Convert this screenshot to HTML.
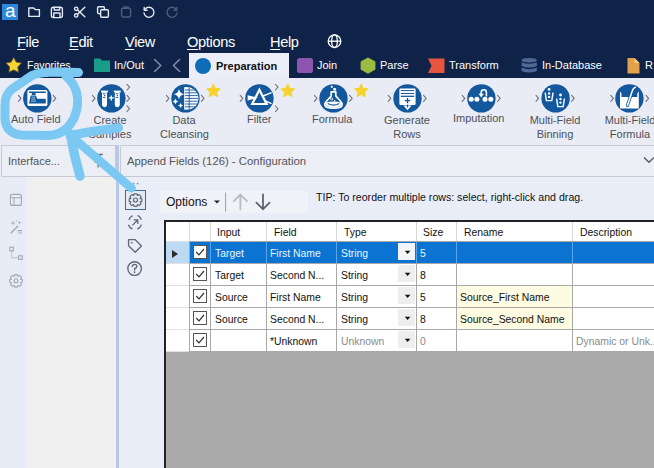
<!DOCTYPE html>
<html><head><meta charset="utf-8">
<style>
*{box-sizing:border-box;margin:0;padding:0}
html,body{width:654px;height:468px;overflow:hidden;background:#e9ecf5;font-family:"Liberation Sans",sans-serif;position:relative}
.a{position:absolute;white-space:nowrap}
#top{left:0;top:0;width:654px;height:78px;background:#0f2348}
.menu{color:#fff;font-size:14.6px;top:33.5px;letter-spacing:-0.35px}
.menu u{text-decoration:underline;text-decoration-thickness:1px;text-underline-offset:1.5px}
.tab{color:#fff;font-size:11px;top:59px}
.tl{color:#4c5058;font-size:11px;text-align:center;margin-top:-1px}
#pal{left:0;top:78px;width:654px;height:67px;background:#e9ecf5}
.hdr{background:#eceef5;border:1px solid #c6cad4}
.grid{border-collapse:collapse}
.cell{position:absolute;font-size:11.8px;color:#111;transform:scaleX(0.88);transform-origin:0 0}
</style></head><body>
<div id="top" class="a"></div>

<!-- logo -->
<div class="a" style="left:2px;top:4px;width:16px;height:16px;background:#2c88d8"></div>
<div class="a" style="left:5px;top:1px;color:#fff;font-size:19px;line-height:19px">a</div>

<!-- menu -->
<div class="a menu" style="left:17px"><u>F</u>ile</div>
<div class="a menu" style="left:69px"><u>E</u>dit</div>
<div class="a menu" style="left:125px"><u>V</u>iew</div>
<div class="a menu" style="left:187px"><u>O</u>ptions</div>
<div class="a menu" style="left:270px"><u>H</u>elp</div>

<!-- tabs -->
<div class="a tab" style="left:27px;font-size:10.6px">Favorites</div>
<div class="a tab" style="left:114px">In/Out</div>
<div class="a" style="left:189px;top:53px;width:100px;height:25px;background:#eceef7"></div>
<div class="a" style="left:216px;top:60px;font-size:11px;font-weight:bold;color:#111">Preparation</div>
<div class="a tab" style="left:317px">Join</div>
<div class="a tab" style="left:380px">Parse</div>
<div class="a tab" style="left:449px">Transform</div>
<div class="a tab" style="left:542px">In-Database</div>
<div class="a tab" style="left:645px">R</div>

<!-- palette -->
<div id="pal" class="a"></div>
<div class="a tl" style="left:11px;top:114px">Auto Field</div>
<div class="a tl" style="left:88px;top:114px;width:44px;line-height:14px">Create<br>Samples</div>
<div class="a tl" style="left:160px;top:114px;width:48px;line-height:14px">Data<br>Cleansing</div>
<div class="a tl" style="left:247px;top:114px">Filter</div>
<div class="a tl" style="left:312px;top:114px">Formula</div>
<div class="a tl" style="left:383px;top:114px;width:48px;line-height:14px">Generate<br>Rows</div>
<div class="a tl" style="left:453px;top:113px">Imputation</div>
<div class="a tl" style="left:526px;top:114px;width:58px;line-height:14px">Multi-Field<br>Binning</div>
<div class="a tl" style="left:601px;top:114px;width:58px;line-height:14px">Multi-Field<br>Formula</div>

<!-- left panel -->
<div class="a" style="left:0;top:176px;width:27px;height:292px;background:#e8ecf7"></div>
<div class="a" style="left:27px;top:176px;width:89px;height:292px;background:#f0f0f0"></div>
<div class="a hdr" style="left:1px;top:145px;width:115px;height:32px"></div>
<div class="a" style="left:8px;top:155px;font-size:11px;color:#555">Interface...</div>
<div class="a" style="left:116px;top:145px;width:3px;height:323px;background:#b8c7e6"></div>

<!-- right panel -->
<div class="a" style="left:119px;top:176px;width:535px;height:292px;background:#e9edf8"></div>
<div class="a hdr" style="left:120px;top:145px;width:540px;height:32px"></div>
<div class="a" style="left:127px;top:155px;font-size:11.3px;color:#555">Append Fields (126) - Configuration</div>

<!-- options bar -->
<div class="a" style="left:160px;top:191px;width:148px;height:22px;background:#f1f2f7"></div>
<div class="a" style="left:166px;top:195px;font-size:12px;color:#111">Options</div>
<div class="a" style="left:316px;top:191px;font-size:10.6px;color:#111">TIP: To reorder multiple rows: select, right-click and drag.</div>

<!-- table -->
<div class="a" style="left:164px;top:220px;width:490px;height:248px;background:#ababab;border-left:2px solid #222;border-top:2px solid #222"></div>
<div class="a" style="left:166px;top:222px;width:488px;height:129px;background:#fff"></div>
<div class="a" style="left:189px;top:241px;width:465px;height:22px;background:#0b74d3"></div>
<div class="a" style="left:166px;top:241px;width:23px;height:22px;background:#bcdaf4"></div>
<div class="a" style="left:172px;top:250px;width:0;height:0;border-top:4px solid transparent;border-bottom:4px solid transparent;border-left:6px solid #2a2a2a"></div>
<div class="a" style="left:457px;top:286px;width:115px;height:21px;background:#fdfbe1"></div>
<div class="a" style="left:457px;top:308px;width:115px;height:21px;background:#fdfbe1"></div>
<div class="a" style="left:166px;top:241px;width:23px;height:1px;background:#e0e0e0"></div>
<div class="a" style="left:189px;top:241px;width:465px;height:1px;background:#a8a8a8"></div>
<div class="a" style="left:166px;top:263px;width:23px;height:1px;background:#e0e0e0"></div>
<div class="a" style="left:189px;top:263px;width:465px;height:1px;background:#a8a8a8"></div>
<div class="a" style="left:166px;top:285px;width:23px;height:1px;background:#e0e0e0"></div>
<div class="a" style="left:189px;top:285px;width:465px;height:1px;background:#a8a8a8"></div>
<div class="a" style="left:166px;top:307px;width:23px;height:1px;background:#e0e0e0"></div>
<div class="a" style="left:189px;top:307px;width:465px;height:1px;background:#a8a8a8"></div>
<div class="a" style="left:166px;top:329px;width:23px;height:1px;background:#e0e0e0"></div>
<div class="a" style="left:189px;top:329px;width:465px;height:1px;background:#a8a8a8"></div>
<div class="a" style="left:166px;top:351px;width:23px;height:1px;background:#e0e0e0"></div>
<div class="a" style="left:189px;top:351px;width:465px;height:1px;background:#a8a8a8"></div>
<div class="a" style="left:189px;top:222px;width:1px;height:129px;background:#a8a8a8"></div>
<div class="a" style="left:210px;top:222px;width:1px;height:129px;background:#a8a8a8"></div>
<div class="a" style="left:266px;top:222px;width:1px;height:129px;background:#a8a8a8"></div>
<div class="a" style="left:336px;top:222px;width:1px;height:129px;background:#a8a8a8"></div>
<div class="a" style="left:416px;top:222px;width:1px;height:129px;background:#a8a8a8"></div>
<div class="a" style="left:456px;top:222px;width:1px;height:129px;background:#a8a8a8"></div>
<div class="a" style="left:572px;top:222px;width:1px;height:129px;background:#a8a8a8"></div>
<div class="a" style="left:189px;top:222px;width:1px;height:19px;background:#d8d8d8"></div>
<div class="a" style="left:210px;top:222px;width:1px;height:19px;background:#d8d8d8"></div>
<div class="a" style="left:266px;top:222px;width:1px;height:19px;background:#d8d8d8"></div>
<div class="a" style="left:336px;top:222px;width:1px;height:19px;background:#d8d8d8"></div>
<div class="a" style="left:416px;top:222px;width:1px;height:19px;background:#d8d8d8"></div>
<div class="a" style="left:456px;top:222px;width:1px;height:19px;background:#d8d8d8"></div>
<div class="a" style="left:572px;top:222px;width:1px;height:19px;background:#d8d8d8"></div>
<div class="a" style="left:210px;top:242px;width:1px;height:21px;background:#5aa6ea"></div>
<div class="a" style="left:266px;top:242px;width:1px;height:21px;background:#5aa6ea"></div>
<div class="a" style="left:336px;top:242px;width:1px;height:21px;background:#5aa6ea"></div>
<div class="a" style="left:416px;top:242px;width:1px;height:21px;background:#5aa6ea"></div>
<div class="a" style="left:456px;top:242px;width:1px;height:21px;background:#5aa6ea"></div>
<div class="a" style="left:572px;top:242px;width:1px;height:21px;background:#5aa6ea"></div>
<div class="a cell" style="left:217px;top:225px">Input</div>
<div class="a cell" style="left:274px;top:225px">Field</div>
<div class="a cell" style="left:344px;top:225px">Type</div>
<div class="a cell" style="left:423px;top:225px">Size</div>
<div class="a cell" style="left:464px;top:225px">Rename</div>
<div class="a cell" style="left:580px;top:225px">Description</div>
<div class="a" style="left:193px;top:245px;width:14px;height:14px;background:#fff;border:1px solid #555"></div>
<svg class="a" style="left:193px;top:245px" width="14" height="14"><path d="M3.2 7 L6 9.8 L11 4" fill="none" stroke="#333" stroke-width="1.2"/></svg>
<div class="a" style="left:398px;top:243px;width:17px;height:17px;background:#f2f4f7"></div>
<svg class="a" style="left:400px;top:241px" width="14" height="20"><path d="M4.8 9.8 H10.4 L7.6 12.9 Z" fill="#111"/></svg>
<div class="a cell" style="left:215px;top:246px;color:#e8f6ff">Target</div>
<div class="a cell" style="left:270px;top:246px;color:#e8f6ff">First Name</div>
<div class="a cell" style="left:341px;top:246px;color:#e8f6ff">String</div>
<div class="a cell" style="left:420px;top:246px;color:#e8f6ff">5</div>
<div class="a" style="left:193px;top:267px;width:14px;height:14px;background:#fff;border:1px solid #555"></div>
<svg class="a" style="left:193px;top:267px" width="14" height="14"><path d="M3.2 7 L6 9.8 L11 4" fill="none" stroke="#333" stroke-width="1.2"/></svg>
<div class="a" style="left:398px;top:265px;width:17px;height:17px;background:#eeeeee"></div>
<svg class="a" style="left:400px;top:263px" width="14" height="20"><path d="M4.8 9.8 H10.4 L7.6 12.9 Z" fill="#111"/></svg>
<div class="a cell" style="left:215px;top:268px;color:#111">Target</div>
<div class="a cell" style="left:270px;top:268px;color:#111">Second N...</div>
<div class="a cell" style="left:341px;top:268px;color:#111">String</div>
<div class="a cell" style="left:420px;top:268px;color:#111">8</div>
<div class="a" style="left:193px;top:289px;width:14px;height:14px;background:#fff;border:1px solid #555"></div>
<svg class="a" style="left:193px;top:289px" width="14" height="14"><path d="M3.2 7 L6 9.8 L11 4" fill="none" stroke="#333" stroke-width="1.2"/></svg>
<div class="a" style="left:398px;top:287px;width:17px;height:17px;background:#eeeeee"></div>
<svg class="a" style="left:400px;top:285px" width="14" height="20"><path d="M4.8 9.8 H10.4 L7.6 12.9 Z" fill="#111"/></svg>
<div class="a cell" style="left:215px;top:290px;color:#111">Source</div>
<div class="a cell" style="left:270px;top:290px;color:#111">First Name</div>
<div class="a cell" style="left:341px;top:290px;color:#111">String</div>
<div class="a cell" style="left:420px;top:290px;color:#111">5</div>
<div class="a cell" style="left:460px;top:290px;color:#111">Source_First Name</div>
<div class="a" style="left:193px;top:311px;width:14px;height:14px;background:#fff;border:1px solid #555"></div>
<svg class="a" style="left:193px;top:311px" width="14" height="14"><path d="M3.2 7 L6 9.8 L11 4" fill="none" stroke="#333" stroke-width="1.2"/></svg>
<div class="a" style="left:398px;top:309px;width:17px;height:17px;background:#eeeeee"></div>
<svg class="a" style="left:400px;top:307px" width="14" height="20"><path d="M4.8 9.8 H10.4 L7.6 12.9 Z" fill="#111"/></svg>
<div class="a cell" style="left:215px;top:312px;color:#111">Source</div>
<div class="a cell" style="left:270px;top:312px;color:#111">Second N...</div>
<div class="a cell" style="left:341px;top:312px;color:#111">String</div>
<div class="a cell" style="left:420px;top:312px;color:#111">8</div>
<div class="a cell" style="left:460px;top:312px;color:#111">Source_Second Name</div>
<div class="a" style="left:193px;top:333px;width:14px;height:14px;background:#fff;border:1px solid #555"></div>
<svg class="a" style="left:193px;top:333px" width="14" height="14"><path d="M3.2 7 L6 9.8 L11 4" fill="none" stroke="#333" stroke-width="1.2"/></svg>
<div class="a" style="left:398px;top:331px;width:17px;height:17px;background:#eeeeee"></div>
<svg class="a" style="left:400px;top:329px" width="14" height="20"><path d="M4.8 9.8 H10.4 L7.6 12.9 Z" fill="#111"/></svg>
<div class="a cell" style="left:270px;top:334px;color:#111">*Unknown</div>
<div class="a cell" style="left:341px;top:334px;color:#8a8a8a">Unknown</div>
<div class="a cell" style="left:420px;top:334px;color:#8a8a8a">0</div>
<div class="a cell" style="left:576px;top:334px;color:#8a8a8a">Dynamic or Unk...</div>
<svg class="a" style="left:0;top:0" width="654" height="468" viewBox="0 0 654 468">
<!-- top toolbar icons -->
<g fill="none" stroke="#e6eaf2" stroke-width="1.4" stroke-linejoin="round" stroke-linecap="round">
  <path d="M28.8 8 H33.6 L35.2 9.6 H39.4 V16.4 H28.8 Z"/>
  <rect x="51.4" y="7.2" width="11" height="10.4" rx="2"/>
  <path d="M54.2 7.4 V10 H59.6 V7.4"/>
  <path d="M53.8 17.4 V13 H60 V17.4"/>
  <circle cx="76.2" cy="8.8" r="1.7"/>
  <circle cx="76.2" cy="15.4" r="1.7"/>
  <path d="M77.6 10 L84.8 16.8 M77.6 14.2 L84.8 7.2"/>
  <path d="M100 13.6 H98.6 Q97.6 13.6 97.6 12.6 V7.8 Q97.6 6.8 98.6 6.8 H103.4 Q104.4 6.8 104.4 7.8 V9.4"/>
  <rect x="100.6" y="9.8" width="7.8" height="7.4" rx="1.2"/>
  <path d="M145.2 9 A5 5 0 1 1 144 13" />
  <path d="M144.2 7.4 V10.2 H147"/>
</g>
<g fill="none" stroke="#4d5d7e" stroke-width="1.4" stroke-linejoin="round" stroke-linecap="round">
  <rect x="121.6" y="8.2" width="9" height="8.8" rx="1.4"/>
  <path d="M124 8.2 V7 H128.2 V8.2"/>
  <path d="M175.8 9 A5 5 0 1 0 177 13"/>
  <path d="M176.8 7.4 V10.2 H174"/>
</g>
<!-- globe -->
<g fill="none" stroke="#fff" stroke-width="1.3">
  <circle cx="334.5" cy="41.2" r="6.3"/>
  <ellipse cx="334.5" cy="41.2" rx="2.8" ry="6.3"/>
  <path d="M328.2 41.2 H340.8"/>
</g>
<!-- tab icons -->
<path d="M13.70 57.40 L16.23 62.12 L21.50 63.07 L17.79 66.93 L18.52 72.23 L13.70 69.90 L8.88 72.23 L9.61 66.93 L5.90 63.07 L11.17 62.12 Z" fill="#f6d437" stroke="#5f5530" stroke-width="0.9" stroke-linejoin="round"/>
<path d="M94 58.5 H100 L101.8 60.5 H110 V72 H94 Z" fill="#1a9d88"/>
<g fill="none" stroke="#7d8aa3" stroke-width="1.6" stroke-linecap="round" stroke-linejoin="round">
  <path d="M154.6 59.5 L160.8 65.5 L154.6 71.5"/>
  <path d="M179.6 59.5 L173.4 65.5 L179.6 71.5"/>
</g>
<circle cx="203" cy="66" r="8" fill="#0f6cb9"/>
<rect x="297" y="58" width="16" height="15" rx="2.5" fill="#8c56b0"/>
<path d="M364 58.2 L372 58.2 L376.2 65.6 L372 73 L364 73 L359.8 65.6 Z" fill="#9bbc42" transform="rotate(90 368 65.6)"/>
<path d="M428 58.5 H444.5 V73 H428 L431.5 65.7 Z" fill="#e8553e"/>
<g fill="#4f6896">
  <ellipse cx="529.2" cy="60.2" rx="7.6" ry="2.3"/>
  <path d="M521.6 62.2 Q529.2 65.4 536.8 62.2 V66 Q529.2 69.2 521.6 66 Z"/>
  <path d="M521.6 67.6 Q529.2 70.8 536.8 67.6 V71 Q529.2 74.2 521.6 71 Z"/>
</g>
<path d="M627.5 58 H634.5 L639.5 63 V73.5 H627.5 Z" fill="#e4a04a"/>
<path d="M634.5 58 V63 H639.5" fill="#f5c98a"/>

<!-- palette chevrons -->
<g fill="none" stroke="#6e737e" stroke-width="1.1" stroke-linecap="round" stroke-linejoin="round">
  <path d="M18.4 95.4 L21 98.4 L18.4 101.4"/><path d="M53.2 95.4 L55.8 98.4 L53.2 101.4"/>
  <path d="M92.4 95.4 L95 98.4 L92.4 101.4"/>
  <path d="M127 84.4 L129.6 87.2 L127 90"/><path d="M127 95.4 L129.6 98.4 L127 101.4"/><path d="M127 105.8 L129.6 108.6 L127 111.4"/>
  <path d="M166.4 95.4 L169 98.4 L166.4 101.4"/><path d="M201.4 95.4 L204 98.4 L201.4 101.4"/>
  <path d="M240.2 95.4 L242.8 98.4 L240.2 101.4"/>
  <path d="M275.4 84.4 L278 87.2 L275.4 90"/><path d="M275.4 106 L278 108.8 L275.4 111.6"/>
  <path d="M314.4 95.4 L317 98.4 L314.4 101.4"/><path d="M349.6 95.4 L352.2 98.4 L349.6 101.4"/>
  <path d="M388.2 95.4 L390.8 98.4 L388.2 101.4"/><path d="M423.6 95.4 L426.2 98.4 L423.6 101.4"/>
  <path d="M462.2 95.4 L464.8 98.4 L462.2 101.4"/><path d="M497.6 95.4 L500.2 98.4 L497.6 101.4"/>
  <path d="M536 95.4 L538.6 98.4 L536 101.4"/><path d="M571.6 95.4 L574.2 98.4 L571.6 101.4"/>
  <path d="M610.8 95.4 L613.4 98.4 L610.8 101.4"/><path d="M646 95.4 L648.6 98.4 L646 101.4"/>
</g>
<!-- palette circles -->
<g fill="#13589c">
  <circle cx="37.3" cy="98.4" r="14.2"/>
  <circle cx="111.4" cy="98.4" r="14.2"/>
  <circle cx="185.5" cy="98.4" r="14.2"/>
  <circle cx="259.4" cy="98.4" r="14.2"/>
  <circle cx="333.5" cy="98.4" r="14.2"/>
  <circle cx="407.5" cy="98.4" r="14.2"/>
  <circle cx="481.4" cy="98.4" r="14.2"/>
  <circle cx="555.6" cy="98.4" r="14.2"/>
  <circle cx="629.4" cy="98.4" r="14.2"/>
</g>
<!-- stars -->
<g fill="#f6d22c" stroke="#f6d22c" stroke-width="1.4" stroke-linejoin="round">
  <path d="M213.40 84.40 L215.16 88.57 L219.68 88.96 L216.25 91.93 L217.28 96.34 L213.40 94.00 L209.52 96.34 L210.55 91.93 L207.12 88.96 L211.64 88.57 Z"/>
  <path d="M287.80 84.40 L289.56 88.57 L294.08 88.96 L290.65 91.93 L291.68 96.34 L287.80 94.00 L283.92 96.34 L284.95 91.93 L281.52 88.96 L286.04 88.57 Z"/>
  <path d="M361.20 84.40 L362.96 88.57 L367.48 88.96 L364.05 91.93 L365.08 96.34 L361.20 94.00 L357.32 96.34 L358.35 91.93 L354.92 88.96 L359.44 88.57 Z"/>
</g>
<!-- Auto Field glyph -->
<rect x="27.4" y="90" width="20" height="16" rx="1.6" fill="#fff"/>
<path d="M29 91.4 H45.8 V93 H35.6 V95 H31.8 V93 H29 Z" fill="#13589c"/>
<path d="M30.6 95.4 H36 L37.2 98.8 H45.8 V103.4 H29 Z" fill="#13589c"/>
<path d="M31.4 97.2 H35.2 M31.2 99.2 H35.6 M31 101.2 H36" stroke="#bcd6ee" stroke-width="0.8"/>
<!-- Create Samples glyph -->
<g fill="#fff">
  <rect x="101" y="90.6" width="7" height="1.8"/>
  <rect x="102" y="91.6" width="5" height="15.6" rx="2.4"/>
  <rect x="113.8" y="90.6" width="7" height="1.8"/>
  <rect x="114.8" y="91.6" width="5" height="15.6" rx="2.4"/>
</g>
<path d="M108.8 97.9 H113.8 M111.3 95.4 V100.4" stroke="#fff" stroke-width="1.3"/>
<path d="M103 93.8 H105.4 M104 95.6 H105.4 M103 97.4 H105.4 M115.8 93.8 H118.2 M116.8 95.6 H118.2 M115.8 97.4 H118.2" stroke="#13589c" stroke-width="1"/>
<!-- Data Cleansing glyph -->
<path d="M184.2 87.2 Q190 86.6 194 89.4 Q198.4 93 198.4 98.4 Q198.4 104 194 107.4 Q190 110.2 184.2 109.6 Z" fill="#fff"/>
<path d="M185 90 H195.6 M185 92.8 H197.2 M185 95.6 H197.8 M185 98.4 H198 M185 101.2 H197.8 M185 104 H197.2 M185 106.8 H195.6 M189.2 87.4 V109.6" stroke="#13589c" stroke-width="0.9"/>
<g fill="#fff">
  <path d="M179 88.8 Q179.648 93.552 184.4 94.2 Q179.648 94.848 179 99.60000000000001 Q178.352 94.848 173.6 94.2 Q178.352 93.552 179 88.8 Z"/>
  <path d="M175.4 98.60000000000001 Q175.82 100.98 178.20000000000002 101.4 Q175.82 101.82000000000001 175.4 104.2 Q174.98000000000002 101.82000000000001 172.6 101.4 Q174.98000000000002 100.98 175.4 98.60000000000001 Z"/>
  <path d="M180.6 103.0 Q180.98999999999998 105.21 183.2 105.6 Q180.98999999999998 105.99 180.6 108.19999999999999 Q180.21 105.99 178.0 105.6 Q180.21 105.21 180.6 103.0 Z"/>
</g>
<!-- Filter glyph -->
<path d="M259.4 89.8 L266.6 104 H252.2 Z" fill="none" stroke="#fff" stroke-width="2.2" stroke-linejoin="miter"/>
<path d="M247.6 95.2 L258 97.8 L247.6 100.4 Z" fill="#fff"/>
<path d="M262.4 96.2 L271.6 92.6 M264.6 100.6 L271.6 103.6" stroke="#fff" stroke-width="1.5"/>
<!-- Formula glyph -->
<circle cx="331.8" cy="86.8" r="1.1" fill="#fff"/>
<circle cx="334.6" cy="89.2" r="1.5" fill="#fff"/>
<path d="M331.2 91.8 H335.8 V95.8 C336.2 97.6 342.4 101.4 342.2 104.4 C342 107.4 338 108.2 333.5 108.2 C329 108.2 325 107.4 324.8 104.4 C324.6 101.4 330.8 97.6 331.2 95.8 Z" fill="none" stroke="#fff" stroke-width="1.7" stroke-linejoin="round"/>
<path d="M325.4 102.6 Q333.5 100.6 341.6 102.6 C342 106.4 338 107.4 333.5 107.4 C329 107.4 325 106.4 325.4 102.6 Z" fill="#fff"/>
<path d="M328.2 103.8 Q333.5 106.6 338.8 103.8" fill="none" stroke="#13589c" stroke-width="1.3" stroke-linecap="round"/>
<circle cx="331.6" cy="99" r="1.1" fill="none" stroke="#fff" stroke-width="0.8"/>
<circle cx="334.6" cy="100.8" r="0.8" fill="#fff"/>
<!-- Generate Rows glyph -->
<rect x="399.4" y="88.6" width="16.2" height="16.4" rx="1.2" fill="#fff"/>
<path d="M400.8 90.6 H414.2 M400.8 93.5 H414.2" stroke="#13589c" stroke-width="1"/>
<path d="M400.8 96.3 H414.2" stroke="#13589c" stroke-width="1.3"/>
<path d="M404.8 100.6 H410.2 M407.5 97.9 V103.3" stroke="#13589c" stroke-width="1.4"/>
<path d="M403.4 105.4 H411.6 L407.5 110.2 Z" fill="#fff"/>
<path d="M407.5 104.6 V107.4" stroke="#13589c" stroke-width="1.2"/>

<!-- Imputation glyph -->
<g fill="#fff">
  <circle cx="471.2" cy="99.2" r="2.5"/><circle cx="476.9" cy="99.2" r="2.5"/><circle cx="485" cy="99.2" r="2.5"/><circle cx="490.8" cy="99.2" r="2.5"/>
</g>
<path d="M486.4 96.4 V92.4 A2.6 2.6 0 0 0 481.2 92.4 V94.4" fill="none" stroke="#fff" stroke-width="1.6"/>
<path d="M478.6 93.8 L481.2 97.4 L483.8 93.8 Z" fill="#fff"/>

<!-- MF Binning glyph -->
<g fill="none" stroke="#fff" stroke-width="1.4">
  <path d="M545.2 92.6 L546.4 100.6 H551.8 L553 92.6"/>
  <path d="M556.6 98.6 L557.8 106.6 H563.2 L564.4 98.6"/>
</g>
<g fill="#fff">
  <circle cx="549.1" cy="89.4" r="1.4"/><circle cx="549.1" cy="93.4" r="1.2"/><circle cx="549.1" cy="96.9" r="1.2"/>
  <circle cx="560.5" cy="95" r="1.4"/><circle cx="560.5" cy="99" r="1.2"/><circle cx="560.5" cy="102.6" r="1.2"/>
</g>

<!-- MF Formula glyph -->
<path d="M620 91.4 L621.5 93.4 V97 H637.3 V93.4 L638.8 91.4 V108.6 H620 Z" fill="#fff"/>
<path d="M627.4 105.4 L632.4 90.6 Q633.2 88.4 635.4 87.2" fill="none" stroke="#13589c" stroke-width="3.2" stroke-linecap="round"/>
<path d="M627.4 105.4 L632.4 90.6 Q633.2 88.4 635.4 87.2" fill="none" stroke="#fff" stroke-width="1.5" stroke-linecap="round"/>

<!-- left sidebar icons -->
<g fill="none" stroke="#a2a7b1" stroke-width="1.1">
  <rect x="10.4" y="194.4" width="11" height="11" rx="2"/>
  <path d="M10.4 197.8 H21.4 M14 197.8 V205.4"/>
  <path d="M10.8 233.2 L18.2 225.8" stroke-width="1.3"/>
  <path d="M17.6 230.6 H22 M18.6 233 H22"/>
  <rect x="9.8" y="247.2" width="3.6" height="3.6"/>
  <rect x="18.6" y="255.8" width="3.6" height="3.6"/>
  <path d="M11.6 251.6 V257.6 H18" stroke-dasharray="1 1"/>
  <circle cx="16" cy="280.8" r="2"/>
  <path d="M14.6 274.6 H17.4 L17.9 276.3 L19.7 275.4 L21.6 277.4 L20.6 279.2 L22.3 279.6 V282.2 L20.6 282.6 L21.6 284.4 L19.6 286.4 L17.9 285.4 L17.4 287.1 H14.6 L14.1 285.4 L12.4 286.4 L10.4 284.4 L11.4 282.6 L9.7 282.2 V279.6 L11.4 279.2 L10.4 277.4 L12.4 275.4 L14.1 276.3 Z" stroke-linejoin="round"/>
</g>
<g fill="#a2a7b1">
  <path d="M13 220.6 L13.6 222.4 L15.4 223 L13.6 223.6 L13 225.4 L12.4 223.6 L10.6 223 L12.4 222.4 Z"/>
  <path d="M19.6 221 L20.1 222.3 L21.4 222.8 L20.1 223.3 L19.6 224.6 L19.1 223.3 L17.8 222.8 L19.1 222.3 Z"/>
  <circle cx="16.6" cy="221" r="0.6"/>
</g>

<!-- config panel icons -->
<rect x="125.5" y="190.5" width="20" height="19" fill="#e4eaf5" stroke="#3e6d8a" stroke-width="1"/>
<g fill="none" stroke="#626a78" stroke-width="1.2" stroke-linejoin="round">
  <circle cx="135.5" cy="200" r="2"/>
  <path d="M134.1 193.8 H136.9 L137.4 195.5 L139.2 194.6 L141.1 196.6 L140.1 198.4 L141.8 198.8 V201.4 L140.1 201.8 L141.1 203.6 L139.1 205.6 L137.4 204.6 L136.9 206.3 H134.1 L133.6 204.6 L131.9 205.6 L129.9 203.6 L130.9 201.8 L129.2 201.4 V198.8 L130.9 198.4 L129.9 196.6 L131.9 194.6 L133.6 195.5 Z"/>
  <path d="M129 220 A6.8 6.8 0 0 1 132.6 215.6 M137.6 215.4 A6.8 6.8 0 0 1 141.4 219.8 M141.4 224.6 A6.8 6.8 0 0 1 137.4 229 M132.4 229 A6.8 6.8 0 0 1 128.4 224.8" stroke-width="1.4"/>
  <path d="M132.4 225.4 L137.6 220 M133.6 219.8 H137.8 V224" stroke-width="1.3"/>
  <path d="M128.6 239.6 H135 L141.4 246 L135.2 252.2 L128.6 245.8 Z" stroke-width="1.4"/>
  <circle cx="131.8" cy="242.8" r="0.9" fill="#626a78" stroke="none"/>
  <circle cx="134.6" cy="268.6" r="6.8" stroke-width="1.4"/>
  <path d="M132.4 266.6 Q132.4 264.4 134.6 264.4 Q136.8 264.4 136.8 266.4 Q136.8 267.8 134.6 268.6 V270" stroke-width="1.4" stroke-linecap="round"/>
</g>
<circle cx="134.6" cy="272.2" r="0.9" fill="#626a78"/>
<g fill="#868b95"><circle cx="129.6" cy="183.6" r="0.9"/><circle cx="133.6" cy="183.6" r="0.9"/><circle cx="137.6" cy="183.6" r="0.9"/></g>

<!-- pin icon in left header -->
<g fill="none" stroke="#6d737e" stroke-width="1.3">
  <path d="M93.4 154.4 H103 M98.2 154.4 V162 M94.6 162 H101.8 M96 154.4 V161.4 M100.4 154.4 V161.4 M98.2 162 V167.4"/>
</g>
<!-- header chevron -->
<path d="M644 157.4 L649 162.2 L654 157.4" fill="none" stroke="#555b66" stroke-width="1.4"/>

<!-- options bar icons -->
<path d="M214 200.6 L217 203.6 L220 200.6 Z" fill="#222"/>
<path d="M225.6 192.6 V211.6" stroke="#9a9ea8" stroke-width="1"/>
<g fill="none" stroke="#b8bdc6" stroke-width="1.8" stroke-linecap="round">
  <path d="M240.4 194.6 V209.4 M233.8 201.2 L240.4 194.6 L247 201.2"/>
</g>
<g fill="none" stroke="#5b6572" stroke-width="1.8" stroke-linecap="round">
  <path d="M263 194.4 V209.2 M256.4 202.6 L263 209.2 L269.6 202.6"/>
</g>
</svg>

<svg class="a" style="left:0;top:0" width="654" height="468" viewBox="0 0 654 468">
<g fill="none" stroke="#7bc9f2" stroke-linecap="round" stroke-linejoin="round">
  <path d="M78.5 72.5 L58 72 C48 72 38 72.5 32 75.5 L12 89 C7 93 5 98 5 105 L5 118 C5 128 11 134 21 135 L48 135.5 C56 135.2 62 133 67 128 C73 122 76.5 114 77.5 105 C78.5 95 76 87 70 80 L66 76" stroke-width="9"/>
  <path d="M70 135.5 C85 132.5 104 129.5 118.5 127.8" stroke-width="9"/>
  <path d="M70.5 134 C73 150 77 166 80 176" stroke-width="9.5"/>
  <path d="M71 136 L131.5 188.2" stroke-width="8.5"/>
</g>
</svg>


</body></html>
